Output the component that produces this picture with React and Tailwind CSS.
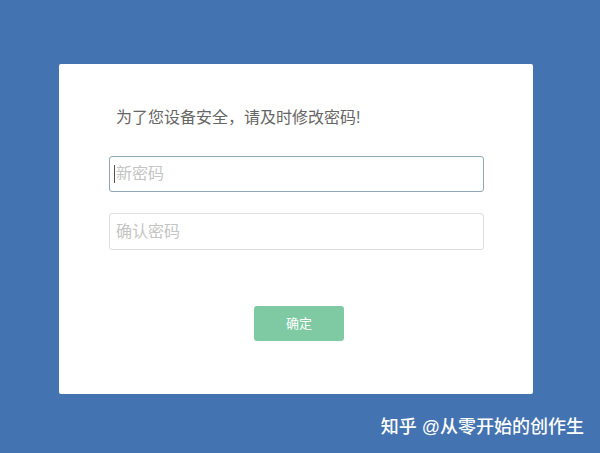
import React from 'react';

const App = () => {
  return (
    <div
      className="min-h-[453px] w-[600px] bg-[#4473b1] pt-[64px]"
      style={{ fontFamily: '"Liberation Sans", "Noto Sans CJK SC", sans-serif' }}
    >
      {/* Card */}
      <div className="ml-[59px] h-[330px] w-[474px] rounded-[2px] bg-white pl-[50px] pt-[43px]">
        <p className="ml-[7px] text-[16px] leading-[22px] text-[#666]">为了您设备安全，请及时修改密码!</p>

        <div className="relative mt-[27px] h-[36px] w-[375px]">
          <input
            type="password"
            placeholder="新密码"
            className="h-full w-full rounded-[3px] border border-[#8fa6b6] bg-white pl-[6px] text-[16px] text-[#333] outline-none placeholder:text-[#c4c4c4]"
          />
          <span className="absolute left-[5px] top-[9px] h-[18px] w-px bg-[#555]"></span>
        </div>

        <input
          type="password"
          placeholder="确认密码"
          className="mt-[21px] h-[37px] w-[375px] rounded-[3px] border border-[#dedede] bg-white pl-[6px] text-[16px] text-[#333] outline-none placeholder:text-[#c4c4c4]"
        />

        <div className="mt-[56px] flex w-[375px] justify-center">
          <button className="ml-[5px] h-[35px] w-[90px] rounded-[3px] bg-[#7fc9a3] text-[13px] text-white">
            确定
          </button>
        </div>
      </div>

      {/* Watermark */}
      <div className="flex justify-end pr-[16px] pt-[21px]">
        <span className="text-[18px] font-medium leading-[24px] text-white">
          知乎 @从零开始的创作生
        </span>
      </div>
    </div>
  );
};

export default App;
